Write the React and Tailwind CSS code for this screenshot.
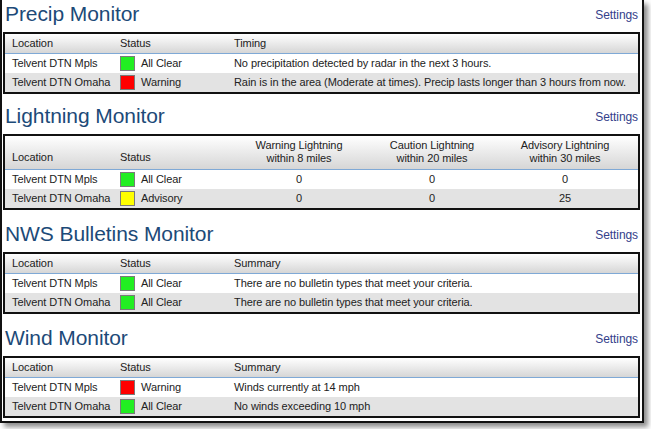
import React from 'react';

const swatch = {
    green: 'bg-[#22ee22]',
    red: 'bg-[#ff0000]',
    yellow: 'bg-[#ffff00]',
};

const monitors = [
    {
        title: 'Precip Monitor',
        third: 'Timing',
        rows: [
            {loc: 'Telvent DTN Mpls', color: 'green', status: 'All Clear', text: 'No precipitation detected by radar in the next 3 hours.'},
            {loc: 'Telvent DTN Omaha', color: 'red', status: 'Warning', text: 'Rain is in the area (Moderate at times). Precip lasts longer than 3 hours from now.'},
        ],
    },
    {
        title: 'Lightning Monitor',
        lightning: true,
        rows: [
            {loc: 'Telvent DTN Mpls', color: 'green', status: 'All Clear', counts: ['0', '0', '0']},
            {loc: 'Telvent DTN Omaha', color: 'yellow', status: 'Advisory', counts: ['0', '0', '25']},
        ],
    },
    {
        title: 'NWS Bulletins Monitor',
        third: 'Summary',
        rows: [
            {loc: 'Telvent DTN Mpls', color: 'green', status: 'All Clear', text: 'There are no bulletin types that meet your criteria.'},
            {loc: 'Telvent DTN Omaha', color: 'green', status: 'All Clear', text: 'There are no bulletin types that meet your criteria.'},
        ],
    },
    {
        title: 'Wind Monitor',
        third: 'Summary',
        rows: [
            {loc: 'Telvent DTN Mpls', color: 'red', status: 'Warning', text: 'Winds currently at 14 mph'},
            {loc: 'Telvent DTN Omaha', color: 'green', status: 'All Clear', text: 'No winds exceeding 10 mph'},
        ],
    },
];

const StatusCell = ({color, status}) => (
    <div className="flex items-center">
        <span className={`inline-block w-[15px] h-[15px] border border-[#7a7a7a] ${swatch[color]}`}/>
        <span className="ml-[6px]">{status}</span>
    </div>
);

const Monitor = ({m, index}) => {
    const lightningHeads = [
        ['Warning Lightning', 'within 8 miles'],
        ['Caution Lightning', 'within 20 miles'],
        ['Advisory Lightning', 'within 30 miles'],
    ];

    return (
        <div className={index === 0 ? '' : index === 1 ? 'mt-[8px]' : 'mt-[10px]'}>
            <div className="flex justify-between items-center h-[28px] mb-[4px] pl-[2px] pr-[2px]">
                <h2 className="text-[21px] leading-[28px] text-[#1c4a78]">{m.title}</h2>
                <a className="text-[12px] text-[#34408a] mt-[1px]">Settings</a>
            </div>
            <div className="border-2 border-[#111]">
                <div className={`flex text-[#222] bg-gradient-to-b from-white to-[#d6d6d6] border-b border-[#7fa9d6] ${m.lightning ? 'h-[34px] items-end pb-[4px]' : 'h-[20px] items-center'}`}>
                    <div className="w-[108px] pl-[7px] shrink-0">Location</div>
                    <div className="w-[114px] pl-[7px] shrink-0">Status</div>
                    {m.lightning ? (
                        <>
                            <div className="w-[144px] text-center leading-[13px]">{lightningHeads[0][0]}<br/>{lightningHeads[0][1]}</div>
                            <div className="w-[122px] text-center leading-[13px]">{lightningHeads[1][0]}<br/>{lightningHeads[1][1]}</div>
                            <div className="w-[144px] text-center leading-[13px]">{lightningHeads[2][0]}<br/>{lightningHeads[2][1]}</div>
                        </>
                    ) : (
                        <div className="pl-[7px]">{m.third}</div>
                    )}
                </div>
                {m.rows.map((r, i) => (
                    <div key={i} className={`flex items-center h-[19px] text-[#222] ${i % 2 ? 'bg-[#e3e3e3]' : 'bg-white'}`}>
                        <div className="w-[108px] pl-[7px] shrink-0">{r.loc}</div>
                        <div className="w-[114px] pl-[7px] shrink-0"><StatusCell color={r.color} status={r.status}/></div>
                        {m.lightning ? (
                            r.counts.map((c, j) => (
                                <div key={j} className={`text-center ${j === 1 ? 'w-[122px]' : 'w-[144px]'}`}>{c}</div>
                            ))
                        ) : (
                            <div className="pl-[7px] whitespace-nowrap">{r.text}</div>
                        )}
                    </div>
                ))}
            </div>
        </div>
    );
};

export default function App() {
    return (
        <div className="w-[651px] h-[429px] bg-white" style={{fontFamily: '"Liberation Sans", Arial, sans-serif'}}>
            <div className="w-[644px] h-[423px] bg-white border-l-2 border-r-2 border-b-2 border-[#111] shadow-[4px_4px_5px_rgba(0,0,0,0.45)] pl-[1px] pr-[2px] text-[11px] tracking-[-0.08px]">
                {monitors.map((m, i) => (
                    <Monitor key={m.title} m={m} index={i}/>
                ))}
            </div>
        </div>
    );
}
